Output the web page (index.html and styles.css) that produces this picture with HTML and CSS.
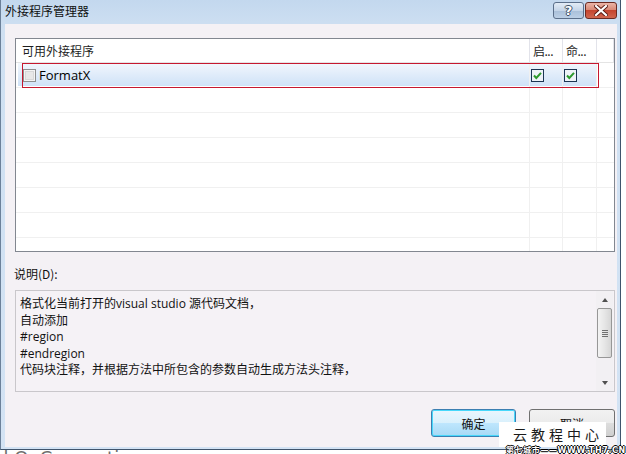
FILE: index.html
```html
<!DOCTYPE html>
<html lang="zh-CN">
<head>
<meta charset="utf-8">
<title>外接程序管理器</title>
<link rel="stylesheet" href="styles.css">
</head>
<body>
<div class="window">
  <div class="titlebar">
    <span class="title">外接程序管理器</span>
    <div class="tbtns">
      <div class="tbtn help">?</div>
      <div class="tbtn close">
        <svg width="14" height="11" viewBox="0 0 14 11"><path d="M2 1 L12 10 M12 1 L2 10" stroke="#5a1a12" stroke-width="4" stroke-linecap="square"/><path d="M2 1 L12 10 M12 1 L2 10" stroke="#fff" stroke-width="2.2" stroke-linecap="square"/></svg>
      </div>
    </div>
  </div>
  <div class="body">
    <div class="list">
      <div class="row head">
        <div class="cell">可用外接程序</div>
        <div class="cell">启...</div>
        <div class="cell">命...</div>
        <div class="cell"></div>
      </div>
      <div class="row sel">
        <div class="cell name">
          <svg class="cb" width="13" height="13" viewBox="0 0 13 13"><rect x="0.5" y="0.5" width="12" height="12" fill="#f4f4f4" stroke="#8e8f8f"/><rect x="2.5" y="2.5" width="8" height="8" fill="#e8e8e8" stroke="#d8d8d8"/></svg>
          <span>FormatX</span>
        </div>
        <div class="cell chk">
          <svg width="13" height="13" viewBox="0 0 13 13"><rect x="0.5" y="0.5" width="12" height="12" fill="#eef3f8" stroke="#1c3553"/><path d="M3 6.5 L5.3 9 L10 3.8" fill="none" stroke="#2e9a2e" stroke-width="2"/></svg>
        </div>
        <div class="cell chk">
          <svg width="13" height="13" viewBox="0 0 13 13"><rect x="0.5" y="0.5" width="12" height="12" fill="#eef3f8" stroke="#1c3553"/><path d="M3 6.5 L5.3 9 L10 3.8" fill="none" stroke="#2e9a2e" stroke-width="2"/></svg>
        </div>
        <div class="cell"></div>
      </div>
      <div class="row"><div class="cell"></div><div class="cell"></div><div class="cell"></div><div class="cell"></div></div>
      <div class="row"><div class="cell"></div><div class="cell"></div><div class="cell"></div><div class="cell"></div></div>
      <div class="row"><div class="cell"></div><div class="cell"></div><div class="cell"></div><div class="cell"></div></div>
      <div class="row"><div class="cell"></div><div class="cell"></div><div class="cell"></div><div class="cell"></div></div>
      <div class="row"><div class="cell"></div><div class="cell"></div><div class="cell"></div><div class="cell"></div></div>
      <div class="row"><div class="cell"></div><div class="cell"></div><div class="cell"></div><div class="cell"></div></div>
      <div class="row"><div class="cell"></div><div class="cell"></div><div class="cell"></div><div class="cell"></div></div>
      <div class="redbox"></div>
    </div>
    <div class="label">说明(D):</div>
    <div class="desc">
      <div class="desc-text">
        <div>格式化当前打开的visual studio 源代码文档，</div>
        <div>自动添加</div>
        <div>#region</div>
        <div>#endregion</div>
        <div>代码块注释，并根据方法中所包含的参数自动生成方法头注释，</div>
      </div>
      <div class="scrollbar">
        <div class="arrow up"></div>
        <div class="thumb"><span></span><span></span><span></span><span></span></div>
        <div class="track"></div>
        <div class="arrow down"></div>
      </div>
    </div>
    <div class="actions">
      <div class="btn default">确定</div>
      <div class="btn">取消</div>
    </div>
  </div>
</div>
<div class="below">d OnConnection</div>
<div class="watermark">
  <div class="wm-box">云教程中心</div>
  <div class="wm-url">第七城市——WWW.TH7.CN</div>
</div>
</body>
</html>
```
FILE: styles.css
```css
html, body {
  margin: 0;
  padding: 0;
  background: #ffffff;
  width: 626px;
  height: 454px;
  overflow: hidden;
  font-family: "Segoe UI", "Open Sans", "Noto Sans CJK SC", sans-serif;
  font-size: 12px;
  color: #000;
}

.window {
  width: 621px;
  height: 450px;
  box-sizing: border-box;
  background: linear-gradient(#c3d8ee, #cfe0f2 30px, #d3e3f4);
  border-left: 1px solid #6c819a;
  border-right: 1px solid #3f546c;
  border-bottom: 1px solid #3f546c;
  display: flex;
  flex-direction: column;
}

.titlebar {
  height: 24px;
  display: flex;
  align-items: flex-start;
  padding: 0 3px 0 4px;
  flex: none;
}
.title {
  font-family: "Noto Sans CJK SC", sans-serif;
  font-size: 12px;
  line-height: 22px;
  color: #111;
}
.tbtns {
  margin-left: auto;
  display: flex;
  gap: 1px;
  padding-top: 2px;
}
.tbtn {
  height: 17px;
  box-sizing: border-box;
  border: 1px solid #5b6f8a;
  border-radius: 3px;
  display: flex;
  align-items: center;
  justify-content: center;
}
.help {
  width: 31px;
  background: linear-gradient(#e3ecf6, #c5d5e8 50%, #a9bfd9 51%, #bcd0e6);
  color: #fff;
  font-family: "DejaVu Sans", sans-serif;
  font-weight: bold;
  font-size: 13px;
  line-height: 15px;
  text-shadow: 1px 0 #3d4f66, -1px 0 #3d4f66, 0 1px #3d4f66, 0 -1px #3d4f66;
}
.close {
  width: 32px;
  border-color: #6a2a22;
  background: linear-gradient(#eab4a6, #d98a77 45%, #c5452f 50%, #d0664f);
}

.body {
  flex: 1;
  margin: 0 3px 2px 4px;
  background: #f4f1f5;
  padding: 14px 2px 0 10px;
  display: flex;
  flex-direction: column;
}

.list {
  position: relative;
  height: 214px;
  box-sizing: border-box;
  border: 1px solid #828790;
  background: #fff;
  overflow: hidden;
  flex: none;
}
.row {
  display: grid;
  grid-template-columns: 514px 33px 34px 1fr;
  height: 25px;
  border-bottom: 1px solid #f0f0f0;
  box-sizing: border-box;
}
.row .cell {
  border-right: 1px solid #f0f0f0;
  display: flex;
  align-items: center;
}
.row .cell:last-child { border-right: none; }
.row.head {
  height: 24px;
  border-bottom: 1px solid #e4e4e4;
}
.row.head .cell {
  border-right: 1px solid #e2e3ea;
  font-family: "Noto Sans CJK SC", sans-serif;
  font-size: 12px;
  color: #1e1e1e;
  padding-left: 6px;
}
.row.head .cell:nth-child(2),
.row.head .cell:nth-child(3) { padding-left: 3px; letter-spacing: -0.5px; }
.row.sel {
  background: linear-gradient(#f2f7fd, #e0ecfa 50%, #cfe2f7) 2px 0 / 579px 23px no-repeat;
}
.cell.name {
  padding-left: 7px;
  gap: 3px;
  font-size: 13px;
}
.cell.name span { line-height: 16px; }
.cell.chk { padding-left: 1px; }
.redbox {
  position: absolute;
  left: 6px;
  top: 24px;
  width: 577px;
  height: 25px;
  box-sizing: border-box;
  border: 1px solid #c6182f;
}

.label {
  margin-top: 14px;
  line-height: 16px;
  height: 16px;
  font-family: "Noto Sans CJK SC", sans-serif;
  font-size: 12px;
  color: #111;
  margin-left: -1px;
}
.desc {
  margin-top: 8px;
  height: 102px;
  box-sizing: border-box;
  border: 1px solid #c9c7cb;
  background: #f5f2f6;
  display: flex;
}
.desc-text {
  flex: 1;
  padding: 5px 0 0 4px;
  font-size: 12px;
  line-height: 16.5px;
  color: #111;
}
.scrollbar {
  width: 17px;
  display: flex;
  flex-direction: column;
  background: #f2f0f3;
  margin-right: 1px;
}
.arrow {
  height: 17px;
  display: flex;
  align-items: center;
  justify-content: center;
}
.arrow::before {
  content: "";
  border-left: 3.5px solid transparent;
  border-right: 3.5px solid transparent;
}
.arrow.up::before { border-bottom: 4px solid #505050; }
.arrow.down::before { border-top: 4px solid #505050; }
.thumb {
  height: 50px;
  margin: 0 1px;
  box-sizing: border-box;
  border: 1px solid #979797;
  border-radius: 2px;
  background: linear-gradient(90deg, #f3f3f3, #e6e6e6 50%, #d6d6d6);
  display: flex;
  flex-direction: column;
  align-items: center;
  justify-content: center;
  gap: 1px;
}
.thumb span {
  width: 6px;
  height: 1px;
  background: #707070;
}
.track { flex: 1; }

.actions {
  margin-top: 17px;
  display: flex;
  justify-content: flex-end;
  gap: 13px;
}
.btn {
  width: 86px;
  height: 28px;
  box-sizing: border-box;
  border: 1px solid #707070;
  border-radius: 3px;
  background: linear-gradient(#f2f2f2, #ebebeb 50%, #dddddd 51%, #cfcfcf);
  display: flex;
  align-items: center;
  justify-content: center;
  font-family: "Noto Sans CJK SC", sans-serif;
  font-size: 12px;
  color: #111;
}
.btn.default {
  width: 85px;
  border-color: #3c7fb1;
  box-shadow: inset 0 0 0 1px #48d8fb;
  background: linear-gradient(#eaf6fd, #d9f0fc 50%, #bee6fd 51%, #a7d9f5);
}

.below {
  margin: -2px 0 0 -3px;
  font-family: "DejaVu Sans", sans-serif;
  font-size: 18px;
  line-height: 20px;
  color: #6e6e6e;
}

.watermark {
  position: absolute;
  left: 499px;
  top: 422px;
  width: 127px;
}
.wm-box {
  width: 107px;
  height: 25px;
  background: #fff;
  font-family: "Noto Sans CJK SC", sans-serif;
  font-size: 14px;
  line-height: 25px;
  letter-spacing: 4px;
  padding-left: 14px;
  box-sizing: border-box;
  white-space: nowrap;
  color: #1a1a1a;
}
.wm-url {
  margin-left: 7px;
  font-family: "DejaVu Sans", "Noto Sans CJK SC", sans-serif;
  font-weight: bold;
  font-size: 8px;
  line-height: 8px;
  letter-spacing: 0.6px;
  color: #fff;
  white-space: nowrap;
  text-shadow: 1px 0 #000, -1px 0 #000, 0 1px #000, 0 -1px #000;
}
```
